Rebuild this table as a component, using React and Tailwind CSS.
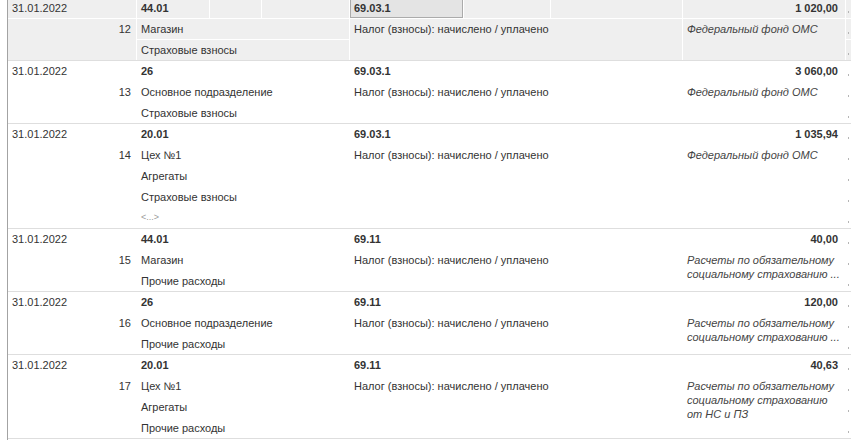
import React from "react";

const records = [
  { date: "31.01.2022", num: "12", acc: "44.01", sub: ["Магазин", "Страховые взносы"], dt: "69.03.1", amt: "1 020,00", kt: ["Федеральный фонд ОМС"], sel: true },
  { date: "31.01.2022", num: "13", acc: "26", sub: ["Основное подразделение", "Страховые взносы"], dt: "69.03.1", amt: "3 060,00", kt: ["Федеральный фонд ОМС"] },
  { date: "31.01.2022", num: "14", acc: "20.01", sub: ["Цех №1", "Агрегаты", "Страховые взносы", "<...>"], dt: "69.03.1", amt: "1 035,94", kt: ["Федеральный фонд ОМС"] },
  { date: "31.01.2022", num: "15", acc: "44.01", sub: ["Магазин", "Прочие расходы"], dt: "69.11", amt: "40,00", kt: ["Расчеты по обязательному", "социальному страхованию ..."] },
  { date: "31.01.2022", num: "16", acc: "26", sub: ["Основное подразделение", "Прочие расходы"], dt: "69.11", amt: "120,00", kt: ["Расчеты по обязательному", "социальному страхованию ..."] },
  { date: "31.01.2022", num: "17", acc: "20.01", sub: ["Цех №1", "Агрегаты", "Прочие расходы"], dt: "69.11", amt: "40,63", kt: ["Расчеты по обязательному", "социальному страхованию", "от НС и ПЗ"] },
];

const rowStart = { 1: "row-start-1", 2: "row-start-2", 3: "row-start-3", 4: "row-start-4", 5: "row-start-5" };
const rowSpan = { 1: "row-span-1", 2: "row-span-2", 3: "row-span-3", 4: "row-span-4" };

function Record({ r }) {
  const n = 1 + r.sub.length;
  const cellBg = r.sel ? "bg-[#efefef]" : "bg-white";
  const rows = Array.from({ length: n }, (_, i) => i + 1);
  return (
    <div className="grid grid-cols-[128px_72px_51px_87px_113px_86px_131px_162px_1fr] auto-rows-[20px] gap-px bg-white border-b border-[#dedede]">
      <div className={`col-start-1 row-start-1 ${cellBg} flex items-center pl-[4px]`}>{r.date}</div>
      <div className={`col-start-2 row-start-1 ${cellBg} flex items-center pl-[4px] font-bold`}>{r.acc}</div>
      <div className={`col-start-3 row-start-1 ${cellBg}`} />
      <div className={`col-start-4 row-start-1 ${cellBg}`} />
      {r.sel ? (
        <div className="col-start-5 row-start-1 bg-[#e4e4e4] border border-[#ababab] flex items-center pl-[3px] font-bold">{r.dt}</div>
      ) : (
        <div className={`col-start-5 row-start-1 ${cellBg} flex items-center pl-[4px] font-bold`}>{r.dt}</div>
      )}
      <div className={`col-start-6 row-start-1 ${cellBg}`} />
      <div className={`col-start-7 row-start-1 ${cellBg}`} />
      <div className={`col-start-8 row-start-1 ${cellBg} flex items-center justify-end pr-[7px] font-bold`}>{r.amt}</div>
      {rows.map((i) => (
        <div key={"m" + i} className={`col-start-9 ${rowStart[i]} ${cellBg} flex items-end pl-[2px] pb-[5px]`}>
          <span className="block w-[1px] h-[2px] bg-[#b5b5b5]" />
        </div>
      ))}
      <div className={`col-start-1 row-start-2 ${rowSpan[n - 1]} ${cellBg} flex justify-end pr-[5px] h-full leading-[20px]`}>{r.num}</div>
      {r.sub.map((s, i) => (
        <div
          key={"s" + i}
          className={`col-start-2 col-span-3 ${rowStart[i + 2]} ${cellBg} flex items-center pl-[4px] ${s === "<...>" ? "text-[9px] text-[#9a9a9a]" : ""}`}
        >
          {s}
        </div>
      ))}
      <div className={`col-start-5 col-span-3 row-start-2 ${rowSpan[n - 1]} ${cellBg} pl-[4px] leading-[20px]`}>
        Налог (взносы): начислено / уплачено
      </div>
      <div className={`col-start-8 row-start-2 ${rowSpan[n - 1]} ${cellBg} pl-[4px] pt-[3px] italic leading-[14px] text-[#444]`}>
        {r.kt.map((k, i) => (
          <div key={i}>{k}</div>
        ))}
      </div>
    </div>
  );
}

export default function App() {
  return (
    <div className="w-[851px] h-[440px] overflow-hidden bg-white pl-[7px] text-[11px] text-[#333] font-['Liberation_Sans',Arial,sans-serif]">
      <div className="h-full border-l border-[#a3a3a3] overflow-hidden">
        <div className="-mt-[2px]">
          {records.map((r, i) => (
            <Record key={i} r={r} />
          ))}
        </div>
      </div>
    </div>
  );
}
